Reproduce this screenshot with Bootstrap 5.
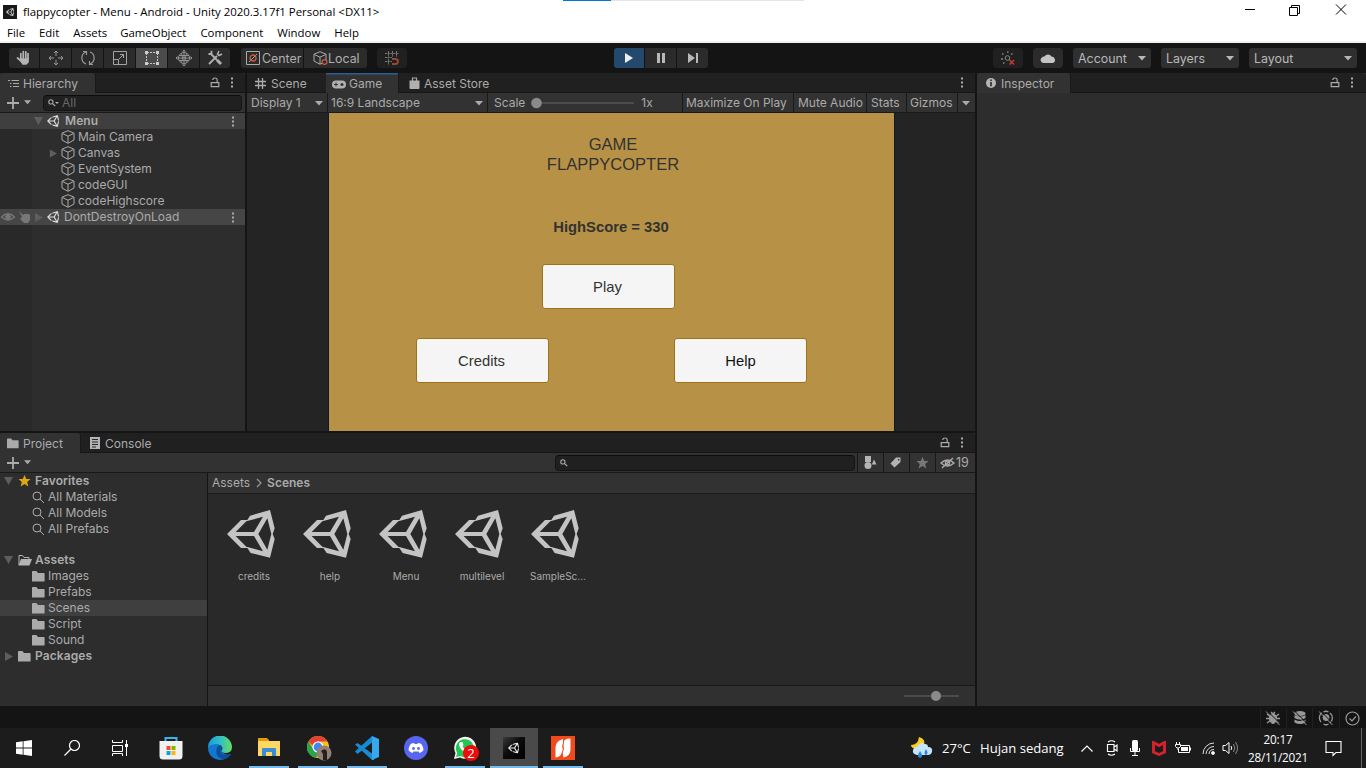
<!DOCTYPE html>
<html lang="en">
<head>
<meta charset="utf-8">
<title>flappycopter</title>
<link rel="stylesheet" href="https://cdn.jsdelivr.net/npm/bootstrap@5.3.0/dist/css/bootstrap.min.css">
<style>
body{width:1366px;height:768px;overflow:hidden;background:#141414;color:#ababab;font:12px/16px Inter,sans-serif;letter-spacing:0;white-space:nowrap}
svg{display:block;flex:none}
b{font-weight:600;letter-spacing:.1px}
.seg{font-family:"Open Sans","Noto Sans",sans-serif;letter-spacing:0}
.winbar{height:43px;background:#fff;color:#000;border-bottom:2px solid #f0f3f0;font-size:12px;position:relative}
.titleline{height:23px;padding-left:3px;font-size:11.45px}
.menuline{height:18px;padding-left:7px;gap:14px;line-height:20px;font-size:11.4px}
.progressline{left:563px;top:0;width:241px;height:1px;background:#e5e5e5}
.progressline i{display:block;width:48px;height:1px;background:#0078d7}
.toolrow{height:30px;background:#141414;padding:5px 0 5px 9px}
.tb{height:20px;background:#2b2b2b;display:flex;align-items:center;justify-content:center;margin-right:1px;width:31px;flex:none;letter-spacing:0}
.tb span{position:relative;top:1px}
.tb.first{border-radius:3px 0 0 3px}.tb.last{border-radius:0 3px 3px 0}
.tb.on{background:#4b4b4b}.tb.play{background:#234a6d;color:#eee}
.tb.pick{justify-content:flex-start;font-size:12.4px;color:#b0b0b0}
.tb.dd{background:#2f2f2f;border-radius:3px;justify-content:space-between;padding:1px 5px 0;color:#b8b8b8;font-size:12.4px}
.workrow{height:358px}
.tabs{height:20px;background:#202020;border-bottom:1px solid #161616;border-radius:4px 4px 0 0}
.ptab{height:20px;padding:3px 0 0;background:#323232;border-right:1px solid #191919;border-radius:3px 3px 0 0;flex:none}
.plain{padding-top:3px}
.ptab.gtab{box-shadow:inset 0 1.5px #28608f;border-radius:0}
.bar{height:20px;background:#323232;border-bottom:1px solid #191919}
.hier{width:245px;background:#2d2d2d;margin-right:2px;flex:none}
.trow{height:16px;position:relative}
.gutter{width:32px;height:16px;background:#292929;flex:none}
.hl{background:#3f3f3f}.hl .gutter{background:transparent}
.field{background:#202020;border:1px solid #151515;border-top-color:#0c0c0c;border-radius:4px;height:16px}
.gamepane{width:728px;background:#242424;flex:none}
.cell{height:20px;border-right:1px solid #191919;padding:0 4px;display:flex;align-items:center;justify-content:space-between;flex:none}
.filter{border-right:0;border-left:1px solid #191919}
.stage{width:567px;height:318px;margin-left:81px;background:#b79145;border-left:1px solid #0b1a33;border-right:1px solid #0b1a33;color:#323232;font-family:"Liberation Sans",Arial,sans-serif;letter-spacing:0}
.viewport-bg{background:#242424;height:318px;display:flex}
.gbtn{width:133px;height:45px;background:#f5f5f5;border:1px solid #9c7414;border-radius:3px;font-size:14.8px;display:flex;align-items:center;justify-content:center;color:#323232;padding:1px 2px 0 0}
.inspector{width:389px;background:#2d2d2d}
.project{width:975px;height:273px;margin-top:2px;background:#2d2d2d}
.tree{width:208px;border-right:1px solid #151515;height:233px}
.browser{background:#292929;flex:1}
.crumb{height:21px;background:#323232;border-bottom:1px solid #1b1b1b;padding-left:4px}
.tile{width:76px;text-align:center;font-size:10px;line-height:14px}
.tile svg{color:#c4c4c4;margin:0 17px 11px 11px}
.foot{height:21px;background:#303030;border-top:1px solid #191919}
.status{height:22px;background:#141414;padding:2px 1px 0 0}
.scell{width:26.3px;height:20px;border-left:1px solid #202020;display:flex;align-items:center;justify-content:center}
.taskbar{height:40px;background:#1c1c1c;color:#fff}
.app{width:49px;height:40px;display:flex;align-items:center;justify-content:center;position:relative;flex:none}
.app.sys{width:48px}
.app.run::after{content:"";position:absolute;left:5px;right:4px;bottom:0;height:2px;background:#76b9ed}
.app.active{background:#4a4a4a;width:48px;margin:0 0 0 1px}.app.active::after{left:0;right:0}
.count{left:23px;top:17px;width:16px;height:16px;border-radius:50%;background:#f00a0a;font:13px/16px "Open Sans",sans-serif;text-align:center;letter-spacing:0}
.ti{display:flex;justify-content:center;flex:none}
.clock{width:72px;font-size:11.7px;line-height:18px;text-align:center;letter-spacing:-.2px}
</style>
</head>
<body>
<svg width="0" height="0" class="position-absolute">
<symbol id="unity" viewBox="0 0 144 144"><path fill="currentColor" fill-rule="evenodd" d="M0 72 42 30H61L69 17 129 0 143 55 137 72 143 87 129 143 71 129 61 114H42ZM26 66H81L108 20 58 34ZM26 78 58 110 108 124 81 78ZM94 72 121 119 133 72 121 25Z"/></symbol>
<symbol id="cube" viewBox="0 0 14 14"><path fill="none" stroke="currentColor" d="M7 .7 13 3.2V10L7 13.3 1 10V3.2ZM1.3 3.5 7 6.2 12.7 3.5M7 6.2V13"/></symbol>
<symbol id="folder" viewBox="0 0 13 11"><path fill="currentColor" d="M0 .8Q0 0 .8 0H4.4L6 2H12Q12.6 2 12.6 2.7V10Q12.6 10.6 12 10.6H.6Q0 10.6 0 10Z"/></symbol>
<symbol id="lock" viewBox="0 0 10 11"><path fill="none" stroke="currentColor" stroke-width="1.2" d="M1.2 5.6H8.8V9.6H1.2ZM2.8 3V2.4Q3 1 5 1T7.2 2.8V5.4"/></symbol>
<symbol id="dots" viewBox="0 0 3 11"><path fill="currentColor" d="M0 .5h2v2h-2zM0 4.500h2v2h-2zM0 8.500h2v2h-2z"/></symbol>
<symbol id="down" viewBox="0 0 8 5"><path fill="currentColor" d="M0 0H8L4 4.5Z"/></symbol>
<symbol id="fold" viewBox="0 0 9 8"><path fill="#5e5e5e" d="M0 0H9L4.5 8Z"/></symbol>
<symbol id="unfold" viewBox="0 0 9 9"><path fill="#5e5e5e" d="M1 0V9L9 4.5Z"/></symbol>
<symbol id="plus" viewBox="0 0 12 12"><path stroke="currentColor" stroke-width="1.8" d="M6 0V12M0 6H12"/></symbol>
<symbol id="mag" viewBox="0 0 13 13"><path fill="none" stroke="currentColor" d="M9 5A4 4 0 1 1 1 5 4 4 0 0 1 9 5M8 8 12 12"/></symbol>
<symbol id="smag" viewBox="0 0 8 8"><path fill="none" stroke="currentColor" stroke-width="1.1" d="M5 2.9A2.1 2.1 0 1 1 .8 2.9 2.1 2.1 0 0 1 5 2.9M4.5 4.5 7.3 7.2"/></symbol>
</svg>

<header class="winbar seg">
  <div class="progressline position-absolute"><i></i></div>
  <div class="titleline d-flex align-items-center">
    <svg width="14" height="14" style="margin-right:6px"><rect width="14" height="14" fill="#181818"/><use href="#unity" x="3" y="3" width="8" height="8" color="#ddd"/></svg>
    <span>flappycopter - Menu - Android - Unity 2020.3.17f1 Personal &lt;DX11&gt;</span>
    <svg width="104" height="14" class="ms-auto" style="margin:-3px 18px 0 0" fill="none" stroke="#000" viewBox="0 0 104 14"><path d="M1 6.500H11M45.500 4.500H53.500V12.500H45.500ZM47.500 4V2.500H55.500V10.500H54M92 1.500 102 11.500M102 1.500 92 11.500"/></svg>
  </div>
  <nav class="menuline d-flex"><span>File</span><span>Edit</span><span>Assets</span><span style="margin-left:-1px">GameObject</span><span>Component</span><span>Window</span><span>Help</span></nav>
</header>

<div class="toolrow d-flex">
  <div class="tb first" style="width:30px"><svg width="16" height="16" fill="none" stroke="#b4b4b4" stroke-linecap="round" stroke-width="1.700"><path d="M4.800 9V3.500M7.300 8V1.500M9.800 8V1.800M12 9V3.500M1.500 8 5 11"/><path d="M5 9H12V12L10 14H7L5 11Z" fill="#b4b4b4"/></svg></div>
  <div class="tb"><svg width="16" height="16" fill="none" stroke="#999"><path d="M8 1V6M8 10V15M1 8H6M10 8H15M6 3 8 1 10 3M6 13 8 15 10 13M3 6 1 8 3 10M13 6 15 8 13 10"/></svg></div>
  <div class="tb"><svg width="16" height="16" fill="none" stroke="#999" stroke-width="1.200"><path d="M6 14C.5 12 .5 4 6 2M3 1.500H6.500V5M10 2C15.500 4 15.500 12 10 14M13 14.500H9.500V11"/></svg></div>
  <div class="tb"><svg width="16" height="16" fill="none" stroke="#a4a4a4"><path d="M1.500 1.500H14.500V14.500H1.500ZM2 9.500H6.500V14M7 9 11.500 4.500M8 4.500H11.500V8"/></svg></div>
  <div class="tb on"><svg width="16" height="16" fill="none" stroke="#c4c4c4"><path stroke-dasharray="2 1" d="M3 2.500H13M3 13.500H13M2.500 3V13M13.500 3V13"/><path fill="#ccc" stroke="none" d="M1 1h3v3H1zM12 1h3v3h-3zM1 12h3v3H1zM12 12h3v3h-3z"/></svg></div>
  <div class="tb"><svg width="16" height="16" fill="none" stroke="#999" stroke-width=".9"><circle cx="8" cy="8" r="5.500"/><path d="M0 8H16M8 0V16M5.500 3.500Q8 8 5.500 12.500M10.500 3.500Q8 8 10.500 12.500M3 5.500H13M3 10.500H13M6.500 1.500 8 0 9.500 1.500M6.500 14.500 8 16 9.500 14.500M1.500 6.500 0 8 1.500 9.500M14.500 6.500 16 8 14.500 9.500"/></svg></div>
  <div class="tb last" style="width:30px"><svg width="16" height="16" fill="none" stroke="#b0b0b0"><path stroke-width="1.800" d="M4 4 10 10M1.500 4H4.500V.8M10 6 2 14"/><path stroke-width="3" d="M10 10 14 14"/><path stroke-width="1.600" d="M12 1 10.500 4 12 5.500 15 4"/></svg></div>
  <div class="tb pick first" style="width:62px;margin-left:10px;padding-left:5px"><svg width="14" height="14" style="margin-right:2px" fill="none" stroke="#aaa"><path d="M.5 .5H13.500V13.500H.5Z"/><path d="M3 11 11 3" /><circle cx="7" cy="7" r="3" stroke="#c95a3a" stroke-width="1.300"/></svg><span>Center</span></div>
  <div class="tb pick last" style="width:63px;padding-left:9px"><svg width="15" height="15"><use href="#cube" x="0" y="0" width="14" height="14" color="#aaa"/><circle cx="11.500" cy="11" r="2.400" fill="#2b2b2b" stroke="#c95a3a" stroke-width="1.300"/></svg><span>Local</span></div>
  <div class="tb rounded-1" style="width:30px;margin-left:9px;background:#202020"><svg width="14" height="14" fill="none" stroke="#777"><path d="M3.500 0V14M7.500 0V6M11.500 0V6M0 2.500H14M0 6.500H7M0 10.500H7" stroke-dasharray="2 .7"/><path stroke="#974732" stroke-width="2" d="M7 8H10.500A2.500 2.500 0 0 1 10.500 13H7"/></svg></div>
  <div class="tb play first" style="width:30px;margin-left:206px"><svg width="10" height="12"><path fill="currentColor" d="M1 1V11L9 6Z"/></svg></div>
  <div class="tb"><svg width="10" height="12" fill="#b8b8b8"><path d="M1 1H4V11H1ZM6 1H9V11H6Z"/></svg></div>
  <div class="tb last"><svg width="12" height="12" fill="#b8b8b8"><path d="M1 1V11L8 6ZM9 1H11V11H9Z"/></svg></div>
  <div class="tb rounded-1" style="width:30px;margin-left:284px;background:#202020"><svg width="14" height="14" fill="none" stroke="#858585"><circle cx="6.500" cy="7" r="2.300"/><path d="M6 1h1.500M1 3h1.500M10 3h1.500M0 8h2M2 12h1.500" stroke-width="1.600"/><path stroke="#c33b35" stroke-width="1.500" d="M8.500 9 13 13.500M13 9 8.500 13.500"/></svg></div>
  <div class="tb rounded-1" style="width:30px;margin-left:9px"><svg width="16" height="12"><path fill="#c4c4c4" d="M4 11A3 3 0 0 1 2 5.500Q3 4 4.500 4.500A4 4 0 0 1 11.500 4.500A3.400 3.400 0 0 1 13 11Z"/></svg></div>
  <div class="tb dd" style="width:78px;margin-left:9px">Account<svg width="8" height="5"><use href="#down"/></svg></div>
  <div class="tb dd" style="width:78px;margin-left:9px">Layers<svg width="8" height="5"><use href="#down"/></svg></div>
  <div class="tb dd" style="width:108px;margin-left:9px">Layout<svg width="8" height="5"><use href="#down"/></svg></div>
</div>

<div class="d-flex">
<div style="width:975px;margin-right:2px">
<div class="workrow d-flex">
  <section class="hier">
    <div class="tabs d-flex">
      <div class="ptab d-flex" style="width:96px;padding-left:8px"><svg width="11" height="9" style="margin-top:3px" fill="none" stroke="currentColor"><path d="M0 1.500H2M3.500 1.500H11M2 4.500H3.500M5 4.500H11M2 7.500H3.500M5 7.500H11"/></svg><span class="ms-1">Hierarchy</span></div>
      <svg class="ms-auto" width="10" height="11" style="margin-top:4px"><use href="#lock"/></svg><svg width="3" height="11" style="margin:4px 11px 0 11px"><use href="#dots"/></svg>
    </div>
    <div class="bar d-flex align-items-center"><svg width="12" height="12" style="margin-left:7px"><use href="#plus"/></svg><svg width="7" height="5" style="margin-left:5px"><use href="#down"/></svg>
      <div class="field d-flex align-items-center" style="width:199px;margin-left:12px;color:#686868"><svg width="11" height="8" style="margin:0 3px 0 4px;color:#aaa"><use href="#smag" width="8" height="8"/><path fill="currentColor" d="M7 3h4L9 5Z"/></svg>All</div></div>
    <div class="trow hl d-flex align-items-center"><span class="gutter"></span><svg width="9" height="8" style="margin:0 4px 0 2px"><use href="#fold"/></svg><svg width="12" height="12" style="margin-right:6px;color:#ddd"><use href="#unity"/></svg><b>Menu</b><svg class="ms-auto" width="3" height="11" style="margin-right:10px"><use href="#dots"/></svg></div>
    <div class="trow d-flex align-items-center"><span class="gutter"></span><svg width="14" height="14" style="margin:0 3px 0 29px"><use href="#cube"/></svg>Main Camera</div>
    <div class="trow d-flex align-items-center"><span class="gutter"></span><svg width="8" height="9" style="margin:0 4px 0 17px"><use href="#unfold"/></svg><svg width="14" height="14" style="margin:0 3px 0 0"><use href="#cube"/></svg>Canvas</div>
    <div class="trow d-flex align-items-center"><span class="gutter"></span><svg width="14" height="14" style="margin:0 3px 0 29px"><use href="#cube"/></svg>EventSystem</div>
    <div class="trow d-flex align-items-center"><span class="gutter"></span><svg width="14" height="14" style="margin:0 3px 0 29px"><use href="#cube"/></svg>codeGUI</div>
    <div class="trow d-flex align-items-center"><span class="gutter"></span><svg width="14" height="14" style="margin:0 3px 0 29px"><use href="#cube"/></svg>codeHighscore</div>
    <div class="trow hl d-flex align-items-center" style="background:#464646"><span class="gutter"><svg width="32" height="16" fill="none" stroke="#777"><path stroke-width="1.300" d="M1.500 8Q8 1.500 14.500 8Q8 14 1.500 8Z"/><circle cx="8" cy="8" r="2.500" fill="#777"/><path fill="#777" stroke="none" d="M19 2 23 6 24 5H29L30 6V11L28 14H24L20 10 22 8Z"/></svg></span><svg width="9" height="9" style="margin:0 4px 0 2px"><use href="#unfold"/></svg><svg width="12" height="12" style="margin-right:5px;color:#ddd"><use href="#unity"/></svg>DontDestroyOnLoad<svg class="ms-auto" width="3" height="11" style="margin-right:10px"><use href="#dots"/></svg></div>
    <div class="gutter" style="height:206px"></div>
  </section>
  <section class="gamepane">
    <div class="tabs d-flex">
      <div class="d-flex plain" style="width:79px;padding-left:8px"><svg width="11" height="11" style="margin:2px 5px 0 0" fill="none" stroke="currentColor" stroke-width="1.300"><path d="M3.500 0V11M7.500 0V11M0 3.500H11M0 7.500H11"/></svg>Scene</div>
      <div class="ptab gtab d-flex" style="width:73px;padding-left:6px"><svg width="14" height="9" style="margin:4px 3px 0 0"><rect y=".5" width="14" height="8" rx="4" fill="#b0b0b0"/><path stroke="#323232" d="M2 4.500H6M4 2.500V6.500"/><circle cx="10" cy="4.500" r="1.500" fill="#323232"/></svg>Game</div>
      <div class="d-flex plain" style="padding-left:9px"><svg width="11" height="13" style="margin:1px 4px 0 1px"><path fill="none" stroke="#aaa" stroke-width="1.200" d="M3.500 4V1H7.500V4"/><path fill="#b0b0b0" d="M.5 3.500H10.500V11Q10.500 12 9.500 12H1.500Q.5 12 .5 11Z"/></svg>Asset Store</div>
      <svg class="ms-auto" width="3" height="11" style="margin:4px 11px 0 0"><use href="#dots"/></svg>
    </div>
    <div class="bar d-flex">
      <div class="cell" style="width:81px">Display 1<svg width="8" height="5"><use href="#down"/></svg></div>
      <div class="cell" style="width:160px;padding-left:3px">16:9 Landscape<svg width="8" height="5"><use href="#down"/></svg></div>
      <div class="cell justify-content-start" style="width:195px;padding-left:6px">Scale<svg width="104" height="12" style="margin:0 7px 0 5px"><path stroke="#555" stroke-width="1.600" d="M6 6H104"/><circle cx="6.500" cy="6" r="5.300" fill="#8a8a8a"/></svg>1x</div>
      <div class="cell" style="width:111px;padding-left:3px">Maximize On Play</div><div class="cell" style="width:73px">Mute Audio</div><div class="cell" style="width:40px;padding-left:4px">Stats</div><div class="cell" style="width:51px;padding-left:3px">Gizmos</div><div class="cell border-0"><svg width="8" height="5"><use href="#down"/></svg></div>
    </div>
    <div class="viewport-bg"><div class="stage">
      <div class="text-center" style="padding:22px 0 0 3px;font-size:16.550px;line-height:20px">GAME<br>FLAPPYCOPTER</div>
      <div class="text-center fw-bold" style="padding:42px 1px 0 0;font-size:14.800px;line-height:20px">HighScore = 330</div>
      <div class="d-flex" style="margin:27px 0 0 213px"><div class="gbtn">Play</div></div>
      <div class="d-flex" style="margin:29px 0 0 87px;gap:125px"><div class="gbtn">Credits</div><div class="gbtn" style="color:#111;padding-right:0">Help</div></div>
    </div></div>
  </section>
</div>

<section class="project">
  <div class="tabs d-flex">
    <div class="ptab d-flex" style="width:81px;padding-left:7px"><svg width="12" height="11" style="margin:2px 4px 0 0"><use href="#folder"/></svg>Project</div>
    <div class="d-flex plain" style="padding-left:9px"><svg width="10" height="12" style="margin:1px 5px 0 0"><path fill="#b4b4b4" d="M0 0H10V12H0Z"/><path stroke="#252525" d="M2 2.500H8M2 5H8M2 7.500H8M2 10H6"/></svg>Console</div>
    <svg class="ms-auto" width="10" height="11" style="margin-top:4px"><use href="#lock"/></svg><svg width="3" height="11" style="margin:4px 11px 0 11px"><use href="#dots"/></svg>
  </div>
  <div class="bar d-flex align-items-center"><svg width="12" height="12" style="margin-left:7px"><use href="#plus"/></svg><svg width="7" height="5" style="margin-left:5px"><use href="#down"/></svg>
    <div class="field d-flex align-items-center ms-auto" style="width:300px;margin-right:2px"><svg width="8" height="8" style="margin-left:4px"><use href="#smag"/></svg></div>
    <div class="cell filter justify-content-center" style="width:26px;padding-right:5px"><svg width="13" height="13"><path fill="#b4b4b4" d="M1 0H7V6H1ZM8 8 10 3.500 12.500 8.500H8Z"/><circle cx="4" cy="9.500" r="3.500" fill="#b4b4b4"/></svg></div>
    <div class="cell filter justify-content-center" style="width:26px;padding-right:6px"><svg width="11" height="11"><path fill="#b4b4b4" fill-rule="evenodd" d="M6 .5H10.500V5L4.500 10.500 .5 6.500ZM8 2V3.500H9.300V2Z"/></svg></div>
    <div class="cell filter justify-content-center" style="width:26px;padding-right:5px"><svg width="13" height="12"><path fill="#777" d="M6.500 0 8.300 4H12.500L9.200 7 10.300 11.500 6.500 9 2.700 11.500 3.800 7 .5 4H4.700Z"/></svg></div>
    <div class="cell filter justify-content-start" style="width:40px"><svg width="15" height="12" fill="none" stroke="#aaa" stroke-width="1.400"><path d="M1 6Q7.500 0 14 6Q7.500 12 1 6ZM2 11 13 1"/><circle cx="7.500" cy="6" r="2"/></svg><span style="font-size:12.500px;margin-left:1px">19</span></div>
  </div>
  <div class="d-flex" style="height:233px">
    <div class="tree">
      <div class="trow d-flex align-items-center"><svg width="9" height="8" style="margin:0 5px 0 4px"><use href="#fold"/></svg><svg width="13" height="12" style="margin-right:4px"><path fill="#dfa70f" d="M6.500 0 8.300 4H12.500L9.200 7 10.300 11.500 6.500 9 2.700 11.500 3.800 7 .5 4H4.700Z"/></svg><b>Favorites</b></div>
      <div class="trow d-flex align-items-center"><svg width="13" height="13" style="margin:0 3px 0 32px"><use href="#mag"/></svg>All Materials</div>
      <div class="trow d-flex align-items-center"><svg width="13" height="13" style="margin:0 3px 0 32px"><use href="#mag"/></svg>All Models</div>
      <div class="trow d-flex align-items-center"><svg width="13" height="13" style="margin:0 3px 0 32px"><use href="#mag"/></svg>All Prefabs</div>
      <div class="trow d-flex align-items-center" style="margin-top:15px"><svg width="9" height="8" style="margin:0 5px 0 4px"><use href="#fold"/></svg><svg width="14" height="11" style="margin-right:3px"><path fill="none" stroke="#b4b4b4" d="M1 10V.5H4.500L6 2.500H11V4"/><path fill="#b4b4b4" d="M3 4H14L11.500 10.500H.5Z"/></svg><b>Assets</b></div>
      <div class="trow d-flex align-items-center"><svg width="13" height="11" style="margin:0 3px 0 32px"><use href="#folder"/></svg>Images</div>
      <div class="trow d-flex align-items-center"><svg width="13" height="11" style="margin:0 3px 0 32px"><use href="#folder"/></svg>Prefabs</div>
      <div class="trow hl d-flex align-items-center"><svg width="13" height="11" style="margin:0 3px 0 32px"><use href="#folder"/></svg>Scenes</div>
      <div class="trow d-flex align-items-center"><svg width="13" height="11" style="margin:0 3px 0 32px"><use href="#folder"/></svg>Script</div>
      <div class="trow d-flex align-items-center"><svg width="13" height="11" style="margin:0 3px 0 32px"><use href="#folder"/></svg>Sound</div>
      <div class="trow d-flex align-items-center"><svg width="9" height="9" style="margin:0 5px 0 4px"><use href="#unfold"/></svg><svg width="13" height="11" style="margin-right:4px"><use href="#folder"/></svg><b>Packages</b></div>
    </div>
    <div class="browser d-flex flex-column">
      <div class="crumb d-flex align-items-center">Assets<svg width="6" height="10" style="margin:0 5px 0 6px" fill="none" stroke="#999" stroke-width="1.200"><path d="M1 1 5 5 1 9"/></svg><b style="letter-spacing:0">Scenes</b></div>
      <div class="d-flex flex-fill" style="padding:16px 0 0 8px">
        <div class="tile"><svg width="48" height="48"><use href="#unity"/></svg>credits</div>
        <div class="tile"><svg width="48" height="48"><use href="#unity"/></svg>help</div>
        <div class="tile"><svg width="48" height="48"><use href="#unity"/></svg>Menu</div>
        <div class="tile"><svg width="48" height="48"><use href="#unity"/></svg>multilevel</div>
        <div class="tile"><svg width="48" height="48"><use href="#unity"/></svg>SampleSc...</div>
      </div>
      <div class="foot d-flex align-items-center justify-content-end"><svg width="55" height="12" style="margin-right:16px"><path stroke="#555" stroke-width="1.500" d="M0 6H55"/><circle cx="32" cy="6" r="5" fill="#8a8a8a"/></svg></div>
    </div>
  </div>
</section>
</div>
<section class="inspector">
  <div class="tabs d-flex"><div class="ptab d-flex" style="width:94px;padding-left:9px"><svg width="10" height="10" style="margin:2px 5px 0 0"><circle cx="5" cy="5" r="5" fill="#b4b4b4"/><path stroke="#282828" stroke-width="1.600" d="M5 1.600V3M5 4V8.200"/></svg>Inspector</div>
  <svg class="ms-auto" width="10" height="11" style="margin-top:4px"><use href="#lock"/></svg><svg width="3" height="11" style="margin:4px 12px 0 11px"><use href="#dots"/></svg></div>
</section>
</div>

<div class="status d-flex justify-content-end">
  <div class="scell"><svg width="16" height="16" fill="none" stroke="#999"><ellipse cx="8" cy="8.500" rx="3.500" ry="5" fill="#999"/><path stroke-width="1.400" d="M2 4 14 13M14 4 2 13M1 8.500H15M6 2 8 4 10 2"/><path stroke="#141414" d="M2 .5 15.500 14"/><path d="M1 1.500 14.500 15"/></svg></div>
  <div class="scell"><svg width="16" height="16" fill="#999"><ellipse cx="8" cy="3.500" rx="5.500" ry="2.500"/><path d="M2.500 5Q8 8 13.500 5V8Q8 11 2.500 8ZM2.500 9.500Q8 12.500 13.500 9.500V12.500Q8 15.500 2.500 12.500Z"/><path stroke="#141414" d="M2 .5 15.500 14"/><path stroke="#999" d="M1 1.500 14.500 15"/></svg></div>
  <div class="scell"><svg width="16" height="16" fill="none" stroke="#999"><path d="M3 12A6.500 6.500 0 0 1 4 2.500M12 13A6.500 6.500 0 0 0 12 3M5.500 2Q8 .5 10.500 2M5.500 14Q8 15.500 10.500 14" stroke-width="1.300"/><circle cx="8" cy="7.500" r="3" fill="#999"/><path stroke="#141414" d="M2 .5 15.500 14"/><path d="M1 1.500 14.500 15"/></svg></div>
  <div class="scell"><svg width="15" height="15" fill="none" stroke="#999" stroke-width="1.200"><circle cx="7.500" cy="7.500" r="6.500"/><path d="M4.500 7.500 7 10 11 5.500"/></svg></div>
</div>

<footer class="taskbar seg d-flex align-items-center">
  <div class="app sys"><svg width="16" height="16" fill="#fff"><path d="M0 2.300 6.700 1.300V7.600H0ZM7.500 1.200 16 0V7.600H7.500ZM0 8.400H6.700V14.700L0 13.700ZM7.500 8.400H16V16L7.500 14.800Z"/></svg></div>
  <div class="app sys"><svg width="16" height="16" fill="none" stroke="#fff" stroke-width="1.200"><circle cx="10.500" cy="5.500" r="5"/><path d="M7 9 .5 15.500"/></svg></div>
  <div class="app sys" style="margin-right:2px"><svg width="16" height="16" fill="none" stroke="#fff"><path d="M.5 0V2.500H10.500V0M.5 5.500H10.500V11.500H.5ZM.5 16V13.500H10.500V16M14.500 0V16"/><path fill="#fff" stroke="none" d="M13 4H16V7H13Z"/></svg></div>
  <div class="app"><svg width="24" height="24"><path fill="none" stroke="#35b5ee" stroke-width="2" d="M6.500 6V2H17.500V6"/><path fill="#f1f1f1" d="M.5 5H23.500V20Q23.500 23.500 20 23.500H4Q.5 23.500 .5 20Z"/><path fill="#f25022" d="M7.500 10h4v4h-4z"/><path fill="#7fba00" d="M12.500 10h4v4h-4z"/><path fill="#00a4ef" d="M7.500 15h4v4h-4z"/><path fill="#ffb900" d="M12.500 15h4v4h-4z"/></svg></div>
  <div class="app"><svg width="24" height="24"><defs><linearGradient id="eg"><stop offset="0" stop-color="#169ddd"/><stop offset=".55" stop-color="#35c1c0"/><stop offset="1" stop-color="#68dc5b"/></linearGradient></defs><path fill="#1377d1" d="M0 12A12 12 0 0 0 16 23.300Q21 21.500 23 18Q17 20 14 16L12 8Q6 5 0 12Z"/><path fill="url(#eg)" d="M0 12A12 12 0 0 1 24 11Q24 17 17 17Q12 16.500 14.500 13Q14 8 8 8Q2 8.500 0 12Z"/><path fill="#0c4f9c" d="M9 11Q6 22 16 23.300Q21 21.500 23 18Q14 21 12.500 15Q13 12 14.500 11.500Q12 8 9 11Z"/></svg></div>
  <div class="app run"><svg width="22" height="18" style="margin-bottom:2px"><path fill="#e09e08" d="M0 0H9L11 2V7H0Z"/><path fill="#ffd765" d="M0 3H22V18H0Z"/><path fill="#398dd4" d="M4 18V11Q4 10 5 10H17Q18 10 18 11V18H14V14H8V18Z"/></svg></div>
  <div class="app run"><svg width="26" height="26" style="margin-left:2px"><circle cx="12" cy="12" r="11" fill="#fbc116"/><path fill="#e34133" d="M2.500 6.500A11 11 0 0 1 21.500 6.500H12Q8 7 7 11Z"/><path fill="#2ba24c" d="M2.500 6.500 7.500 14.500Q10 17 13 16L10 23A11 11 0 0 1 2.500 6.500Z"/><circle cx="12" cy="12" r="5" fill="#4285f4" stroke="#fff" stroke-width="1.200"/><circle cx="18" cy="18" r="7.500" fill="#937f76"/><path fill="#242020" d="M15 16Q20 12 21 17V25H17V19Z"/></svg></div>
  <div class="app run"><svg width="24" height="24"><path fill="#1c8bd1" d="M0 8.500 2.500 7 19 19V24L17 24Z"/><path fill="#168ad3" d="M17 0 19 5 2.500 18 0 15.500Z"/><path fill="#36a8ed" d="M17 0 24 3V21L17 24V6Z"/></svg></div>
  <div class="app"><svg width="24" height="24"><circle cx="12" cy="12" r="12" fill="#5865f2"/><path fill="#fff" d="M4.500 14Q5 9 7.500 7.500L10 7 10.700 8H13.300L14 7 16.500 7.500Q19 9 19.500 14Q18 16.500 15.500 17L14.500 15.500H9.500L8.500 17Q6 16.500 4.500 14Z"/><circle cx="9.500" cy="12.500" r="1.400" fill="#5865f2"/><circle cx="14.500" cy="12.500" r="1.400" fill="#5865f2"/></svg></div>
  <div class="app run"><svg width="24" height="24"><path fill="#f5f5f5" d="M1 23 2.500 17A11 11 0 1 1 7 21.500Z"/><path fill="#22c655" d="M3 21 4.300 17A9 9 0 1 1 7.500 20Z"/><path fill="#fff" d="M7 6 9.500 6 10.500 9 9.500 10.500Q11 13 14 14L15.500 13 18 14.500Q17 18 13 17Q6 13 6 8Z"/></svg><span class="count position-absolute">2</span></div>
  <div class="app run active"><svg width="22" height="22"><defs><linearGradient id="ub" x2="1" y2="1"><stop stop-color="#3a3a3a"/><stop offset=".45" stop-color="#0c0c0c"/><stop offset="1" stop-color="#000"/></linearGradient></defs><rect width="22" height="22" fill="url(#ub)"/><use href="#unity" x="5" y="5.500" width="11" height="11" color="#eee"/></svg></div>
  <div class="app run"><svg width="24" height="24"><path fill="#f04a1d" d="M0 0H24V24H0Z"/><path fill="#fff" d="M4.500 11Q5 5 12 3V7Q11 11 12 14L11 16Q10 21 4.500 21.500ZM12 7Q12.500 2.500 19.500 2.500V14Q19 20 12.500 21.500L11 16 12.500 13Z"/><path stroke="#f04a1d" fill="none" d="M12.500 2V7Q11 10 12.500 13Q11 16 11 19"/></svg></div>
  <div class="ms-auto d-flex align-items-center">
    <svg width="22" height="22"><path fill="#ffcb1f" d="M8 0Q15 2 13 8L5 12Q0 11 0 8Q7 8 8 0Z"/><path fill="#c3e4fa" d="M6 18Q1 17 2 13Q3 10 6 10Q9 4 14 7Q17 7 17 10Q22 10 21 15Q20 18 17 18Z"/><path fill="#2787df" d="M9 14Q13 20 9 21Q5 20 9 14ZM15 12Q18 17 15 18Q12 17 15 12Z"/></svg>
    <span style="font-size:13.100px;margin-left:9px;width:38px">27°C</span><span style="font-size:13.100px;width:85px">Hujan sedang</span>
    <div class="ti" style="width:44px"><svg width="12" height="7" fill="none" stroke="#fff" stroke-width="1.200"><path d="M.5 6.500 6 1 11.500 6.500"/></svg></div>
    <div class="ti" style="width:5px"><svg width="14" height="16" fill="none" stroke="#fff"><path stroke-width="1.200" d="M2.500 4.500H9V11.500H2.500ZM9 7 12 5V11L9 9M3 2Q6.500 -.5 10 2M3 14Q6.500 16.500 10 14"/></svg></div>
    <div class="ti" style="width:41px"><svg width="10" height="16" fill="none" stroke="#fff"><rect x="2" y="0" width="6" height="11" rx="1.500" fill="#fff" stroke="none"/><path d="M.5 8V11.500H9.500V8M5 12V15.500M2 15.500H8"/></svg></div>
    <div class="ti" style="width:7px"><svg width="14" height="15"><path fill="none" stroke="#d2222c" stroke-width="3" d="M1.500 1.500V11L7 13.500 12.500 11V1.500L7 4.500Z"/></svg></div>
    <div class="ti" style="width:42px"><svg width="16" height="12" fill="none" stroke="#fff"><path d="M5 3.500H14.500V10.500H3.500V7M15.500 5.500V8.500M1.500 0V2.500M4.500 0V2.500M.5 2.500H5.500V4.500L4 6H2L.5 4.500ZM3 6V8"/><path fill="#fff" stroke="none" d="M6 5H13V9H6Z"/></svg></div>
    <div class="ti" style="width:8px"><svg width="13" height="13" fill="none" stroke="#ddd"><path d="M1 12A11 11 0 0 1 12 1M4 12A8 8 0 0 1 12 4.500M7 12A5 5 0 0 1 12 7.500"/><circle cx="11" cy="11" r="1.500" fill="#fff"/></svg></div>
    <div class="ti" style="width:36px;margin-right:-6px"><svg width="17" height="14" fill="none" stroke="#fff"><path d="M1 4.500H3.500L7 1.500V12.500L3.500 9.500H1ZM9 5Q10.500 7 9 9"/><path stroke="#888" d="M11.500 3Q14 7 11.500 11M13.500 1Q17.500 7 13.500 13"/></svg></div>
    <div class="clock">20:17<br>28/11/2021</div>
    <div class="ti" style="width:38px;margin-right:9px"><svg width="17" height="17" fill="none" stroke="#fff" stroke-width="1.100"><path d="M1 1.500H16V12.500H11L8 15.500V12.500H1Z"/></svg></div>
    <div style="width:1px;height:40px;background:#656565;margin-right:4px"></div>
  </div>
</footer>
<script src="https://cdn.jsdelivr.net/npm/bootstrap@5.3.0/dist/js/bootstrap.bundle.min.js"></script>
</body>
</html>
